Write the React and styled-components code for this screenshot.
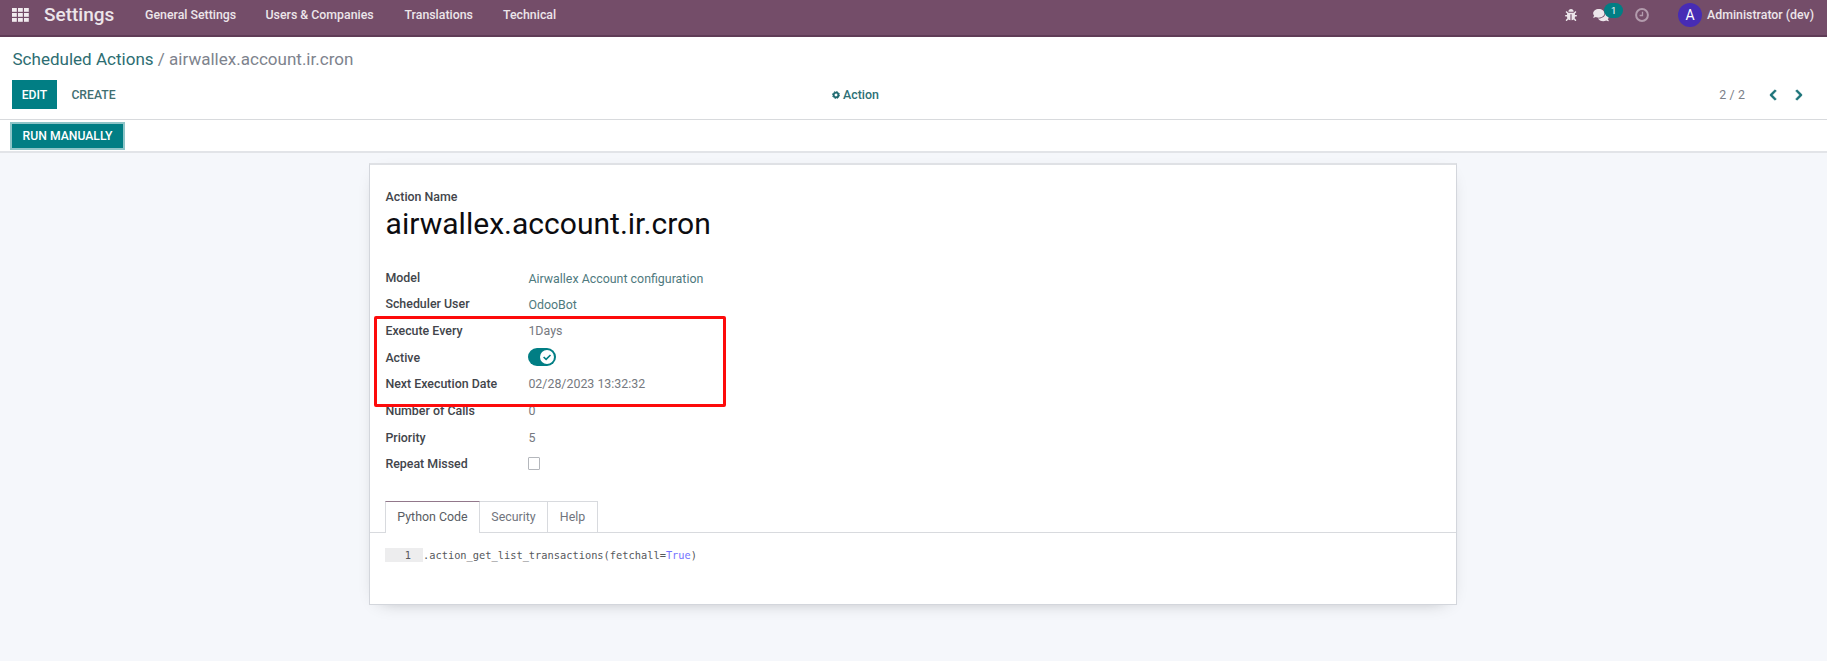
import React from 'react';
import styled, { createGlobalStyle } from 'styled-components';
import { FaBug, FaComments, FaChevronLeft, FaChevronRight } from 'react-icons/fa';

const GlobalStyle = createGlobalStyle`
  * { box-sizing: border-box; }
  body {
    margin: 0;
    background: #f5f7fb;
    font-family: Roboto, "Liberation Sans", sans-serif;
    font-size: 12.4px;
    color: #666b72;
  }
`;

const Page = styled.div`
  height: 661px;
  display: flex;
  flex-direction: column;
  overflow: hidden;
`;

const Navbar = styled.header`
  height: 37px;
  flex: none;
  display: flex;
  align-items: center;
  padding: 0 13px 6px 12px;
  background: #744d69;
  border-bottom: 2px solid #5f3c56;
  color: #ece5ea;
`;

const AppsIcon = styled.svg`
  width: 17px;
  height: 14px;
  margin-right: 15px;
  fill: #f1ebef;
`;

const Brand = styled.div`
  width: 101px;
  font-size: 19px;
  font-weight: 500;
`;

const NavItem = styled.a`
  width: ${(p) => p.$width}px;
  font-size: 12.35px;
  font-weight: 500;
  white-space: nowrap;
`;

const Systray = styled.div`
  margin-left: auto;
  display: flex;
  align-items: center;
`;

const BugIcon = styled(FaBug)`
  width: 12px;
  height: 12px;
  margin-right: 16px;
`;

const Messages = styled.div`
  position: relative;
  display: flex;
  margin-right: 26px;
  svg { width: 16px; height: 14px; }
`;

const Badge = styled.span`
  position: absolute;
  left: 11px;
  top: -5px;
  width: 19px;
  height: 15px;
  border-radius: 8px;
  background: #017e84;
  color: #fff;
  font-size: 9.5px;
  line-height: 15px;
  text-align: center;
`;

const ClockIcon = styled.svg`
  width: 14px;
  height: 14px;
  margin-right: 29px;
  fill: none;
  stroke: #b39bad;
  stroke-width: 2;
`;

const Avatar = styled.div`
  width: 24px;
  height: 24px;
  margin-right: 5px;
  border-radius: 50%;
  background: #472cb5;
  color: #fff;
  font-size: 14px;
  line-height: 25px;
  text-align: center;
`;

const ControlPanel = styled.section`
  height: 83px;
  flex: none;
  padding: 11px 20px 0 12px;
  background: #fff;
  border-bottom: 1px solid #d8dadd;
`;

const Breadcrumb = styled.div`
  height: 32px;
  padding-left: 0.5px;
  line-height: 22px;
  font-size: 17.05px;
  color: #7e838d;
  white-space: nowrap;
  a { color: #2d6d72; }
`;

const ControlRow = styled.div`
  display: grid;
  grid-template-columns: 820px auto 1fr;
  align-items: center;
  height: 29px;
`;

const Buttons = styled.div`
  display: flex;
  align-items: center;
`;

const Button = styled.button`
  height: ${(p) => p.$height || 29}px;
  width: ${(p) => p.$width}px;
  padding: 0;
  border: 0;
  font-family: inherit;
  font-size: 12.2px;
  font-weight: 500;
  white-space: nowrap;
  background: ${(p) => (p.$primary ? '#017e84' : 'transparent')};
  color: ${(p) => (p.$primary ? '#fff' : '#426f72')};
  box-shadow: ${(p) => (p.$focused ? '0 0 0 2px #8fc5c8' : 'none')};
`;

const ActionMenu = styled.div`
  display: flex;
  align-items: center;
  gap: 3px;
  color: #2d7076;
  font-weight: 500;
  font-size: 12.4px;
`;

const GearIcon = styled.svg`
  width: 8px;
  height: 8px;
  fill: none;
  stroke: #1f6a70;
`;

const Pager = styled.div`
  display: flex;
  align-items: center;
  justify-content: flex-end;
  padding-right: 4px;
  color: #7b8088;
  svg { height: 12px; width: 8px; color: #1a7278; stroke: #1a7278; stroke-width: 30px; }
`;

const PagerCount = styled.span`
  margin-right: 24px;
  letter-spacing: 0.1px;
`;

const PagerNext = styled(FaChevronRight)`
  margin-left: 18px;
`;

const StatusBar = styled.section`
  height: 33px;
  flex: none;
  padding: 4px 12px 0;
  background: #fff;
  border-bottom: 2px solid #e2e4e8;
`;

const Sheet = styled.main`
  position: relative;
  width: 1088px;
  height: 442px;
  flex: none;
  margin: 10px 0 0 369px;
  padding-top: 25px;
  background: #fff;
  border: 1px solid #d3d6dc;
  border-top: 2px solid #dfe1e5;
  box-shadow: 0 5px 18px -12px rgba(0, 0, 0, 0.45);
`;

const NameLabel = styled.div`
  padding-left: 15.6px;
  line-height: 14px;
  font-size: 12.4px;
  font-weight: 500;
  color: #42454b;
`;

const Title = styled.h1`
  margin: 0 0 21px;
  padding-left: 15.6px;
  line-height: 39px;
  font-size: 30.05px;
  font-weight: 400;
  color: #0c0c10;
`;

const Fields = styled.dl`
  margin: 0;
  padding-left: 15.4px;
  display: grid;
  grid-template-columns: 143px 1fr;
  grid-auto-rows: 26.67px;
  align-items: center;
`;

const FieldLabel = styled.dt`
  font-size: 12.4px;
  font-weight: 500;
  color: #42454b;
  white-space: nowrap;
`;

const FieldValue = styled.dd`
  margin: 0;
  padding-top: ${(p) => (p.$link ? 2 : 0)}px;
  color: ${(p) => (p.$link ? '#4f7a7e' : '#757980')};
  white-space: nowrap;
`;

const Toggle = styled.div`
  display: flex;
  align-items: center;
  justify-content: flex-end;
  width: 28px;
  height: 18px;
  padding-right: 2px;
  border-radius: 9px;
  background: #017e84;
`;

const Knob = styled.svg`
  width: 14px;
  height: 14px;
  border-radius: 50%;
  background: #fff;
  fill: none;
  stroke: #017e84;
  stroke-width: 1.6;
`;

const Checkbox = styled.div`
  width: 12px;
  height: 13px;
  border: 1px solid #b4b7bc;
  border-radius: 1px;
`;

const Highlight = styled.div`
  position: absolute;
  left: 4px;
  top: 151px;
  width: 352px;
  height: 91px;
  border: 3px solid #fd0b0b;
  border-radius: 2px;
`;

const Tabs = styled.nav`
  display: flex;
  height: 32px;
  margin-top: 24px;
  padding-left: 15px;
  border-bottom: 1px solid #d8dade;
`;

const Tab = styled.a`
  width: ${(p) => p.$width}px;
  height: ${(p) => (p.$active ? 32 : 31)}px;
  line-height: 30px;
  text-align: center;
  background: #fff;
  border: solid #d8dade;
  border-width: 1px 1px 0 ${(p) => (p.$active ? 1 : 0)}px;
  border-top-color: ${(p) => (p.$active ? '#92788b' : '#d8dade')};
  color: ${(p) => (p.$active ? '#595d64' : '#71757d')};
`;

const Editor = styled.pre`
  display: flex;
  margin: 15px 0 0 15px;
  height: 14px;
  line-height: 14px;
  font-family: "DejaVu Sans Mono", monospace;
  font-size: 10.35px;
  color: #56585c;
`;

const Gutter = styled.span`
  width: 38px;
  padding-right: 12px;
  background: #ededee;
  text-align: right;
`;

const Keyword = styled.span`
  color: #7474ff;
`;

const GRID = [0, 6, 12];

const menu = [
  ['General Settings', 120.5],
  ['Users & Companies', 139],
  ['Translations', 98.5],
  ['Technical', 60],
];

export default function App() {
  return (
    <Page>
      <GlobalStyle />
      <Navbar>
        <AppsIcon viewBox="0 0 17 14">
          {[0, 5, 10].map((y) => GRID.map((x) => <rect key={`${x}-${y}`} x={x} y={y} width="4.8" height="3.8" />))}
        </AppsIcon>
        <Brand>Settings</Brand>
        {menu.map(([name, width]) => (
          <NavItem key={name} $width={width}>{name}</NavItem>
        ))}
        <Systray>
          <BugIcon />
          <Messages>
            <FaComments />
            <Badge>1</Badge>
          </Messages>
          <ClockIcon viewBox="0 0 14 14">
            <circle cx="7" cy="7" r="5.9" />
            <path d="M7.5 3.7v3.8H4.6" strokeWidth="1.3" />
          </ClockIcon>
          <Avatar>A</Avatar>
          <NavItem>Administrator (dev)</NavItem>
        </Systray>
      </Navbar>

      <ControlPanel>
        <Breadcrumb><a>Scheduled Actions</a> / airwallex.account.ir.cron</Breadcrumb>
        <ControlRow>
          <Buttons>
            <Button $primary $width={45}>EDIT</Button>
            <Button $width={73}>CREATE</Button>
          </Buttons>
          <ActionMenu>
            <GearIcon viewBox="0 0 8 8">
              <circle cx="4" cy="4" r="2.4" strokeWidth="1.9" />
              <circle cx="4" cy="4" r="3.5" strokeWidth="1" strokeDasharray="1.375" />
            </GearIcon>
            Action
          </ActionMenu>
          <Pager>
            <PagerCount>2 / 2</PagerCount>
            <FaChevronLeft />
            <PagerNext />
          </Pager>
        </ControlRow>
      </ControlPanel>

      <StatusBar>
        <Button $primary $focused $height={24} $width={111}>RUN MANUALLY</Button>
      </StatusBar>

      <Sheet>
        <NameLabel>Action Name</NameLabel>
        <Title>airwallex.account.ir.cron</Title>
        <Fields>
          <FieldLabel>Model</FieldLabel>
          <FieldValue $link>Airwallex Account configuration</FieldValue>
          <FieldLabel>Scheduler User</FieldLabel>
          <FieldValue $link>OdooBot</FieldValue>
          <FieldLabel>Execute Every</FieldLabel>
          <FieldValue>1Days</FieldValue>
          <FieldLabel>Active</FieldLabel>
          <FieldValue>
            <Toggle>
              <Knob viewBox="0 0 14 14"><path d="M3.6 7l2.5 2.4 4.4-4.4" /></Knob>
            </Toggle>
          </FieldValue>
          <FieldLabel>Next Execution Date</FieldLabel>
          <FieldValue>02/28/2023 13:32:32</FieldValue>
          <FieldLabel>Number of Calls</FieldLabel>
          <FieldValue>0</FieldValue>
          <FieldLabel>Priority</FieldLabel>
          <FieldValue>5</FieldValue>
          <FieldLabel>Repeat Missed</FieldLabel>
          <FieldValue><Checkbox /></FieldValue>
        </Fields>
        <Highlight />
        <Tabs>
          <Tab $active $width={95}>Python Code</Tab>
          <Tab $width={68}>Security</Tab>
          <Tab $width={50}>Help</Tab>
        </Tabs>
        <Editor>
          <Gutter>1</Gutter>
          <span>.action_get_list_transactions(fetchall=<Keyword>True</Keyword>)</span>
        </Editor>
      </Sheet>
    </Page>
  );
}
